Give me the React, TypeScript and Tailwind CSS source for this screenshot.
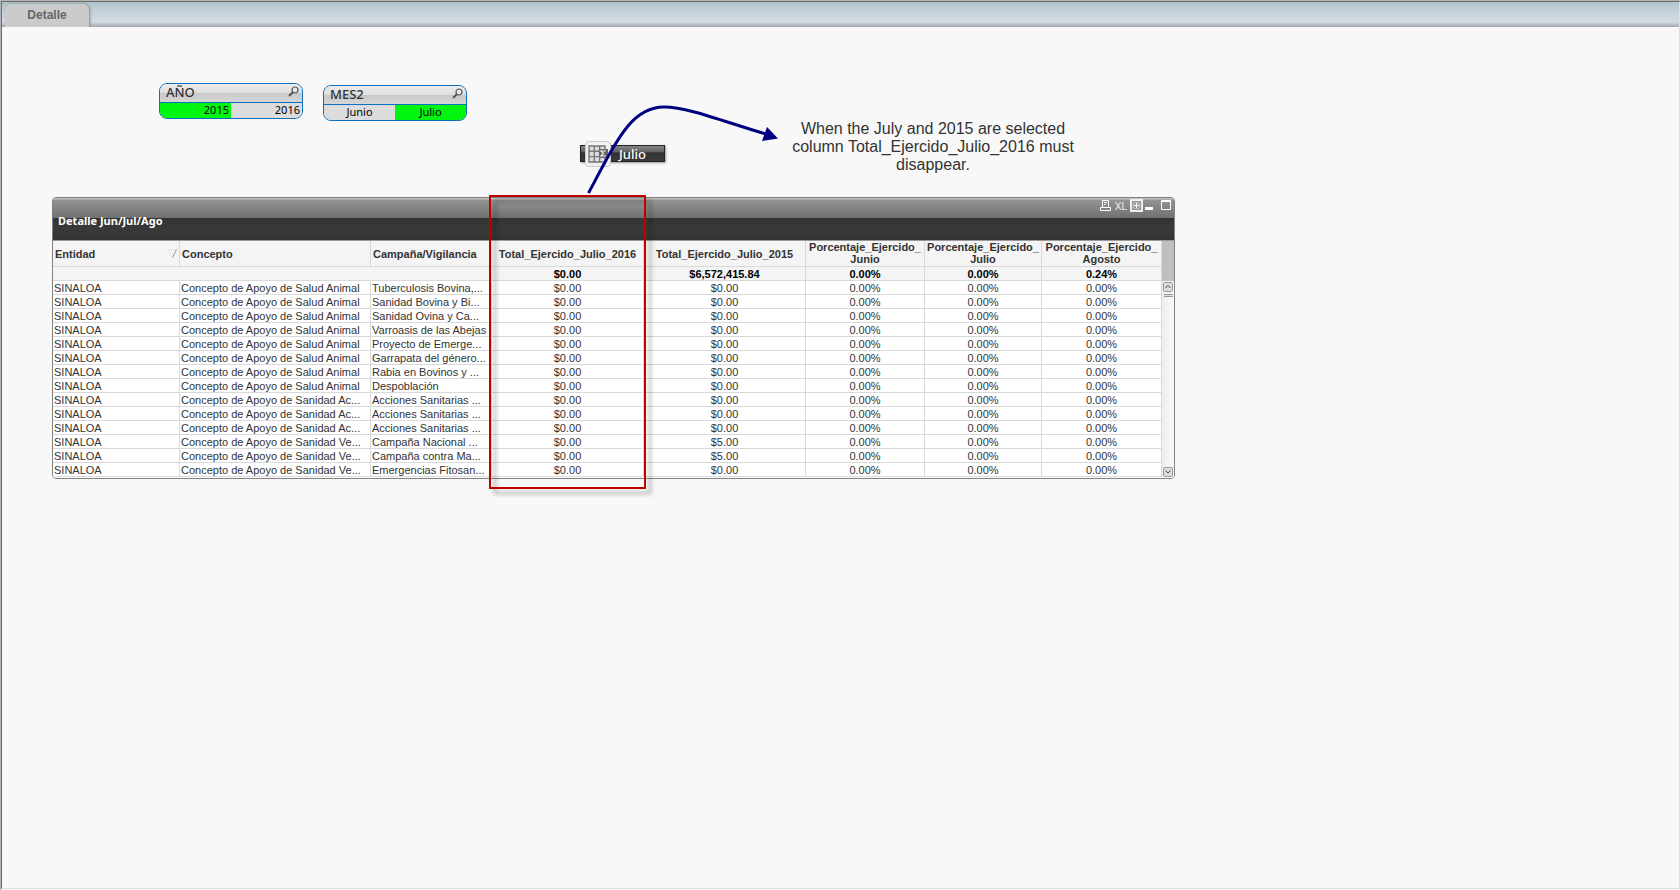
import React, { useState } from 'react';

interface ListBoxProps {
  title: string;
  values: string[];
  selected: string;
  align: 'right' | 'center';
  onSelect: (value: string) => void;
}

interface Row {
  concepto: string;
  campania: string;
  total2015: string;
}

const ANIMAL = 'Concepto de Apoyo de Salud Animal';
const ACUICOLA = 'Concepto de Apoyo de Sanidad Ac...';
const VEGETAL = 'Concepto de Apoyo de Sanidad Ve...';

const rows: Row[] = [
  { concepto: ANIMAL, campania: 'Tuberculosis Bovina,...', total2015: '$0.00' },
  { concepto: ANIMAL, campania: 'Sanidad Bovina y Bi...', total2015: '$0.00' },
  { concepto: ANIMAL, campania: 'Sanidad Ovina y Ca...', total2015: '$0.00' },
  { concepto: ANIMAL, campania: 'Varroasis de las Abejas', total2015: '$0.00' },
  { concepto: ANIMAL, campania: 'Proyecto de Emerge...', total2015: '$0.00' },
  { concepto: ANIMAL, campania: 'Garrapata del género...', total2015: '$0.00' },
  { concepto: ANIMAL, campania: 'Rabia en Bovinos y ...', total2015: '$0.00' },
  { concepto: ANIMAL, campania: 'Despoblación', total2015: '$0.00' },
  { concepto: ACUICOLA, campania: 'Acciones Sanitarias ...', total2015: '$0.00' },
  { concepto: ACUICOLA, campania: 'Acciones Sanitarias ...', total2015: '$0.00' },
  { concepto: ACUICOLA, campania: 'Acciones Sanitarias ...', total2015: '$0.00' },
  { concepto: VEGETAL, campania: 'Campaña Nacional ...', total2015: '$5.00' },
  { concepto: VEGETAL, campania: 'Campaña contra Ma...', total2015: '$5.00' },
  { concepto: VEGETAL, campania: 'Emergencias Fitosan...', total2015: '$0.00' },
];

const totals = ['$0.00', '$6,572,415.84', '0.00%', '0.00%', '0.24%'];

const textHead = 'h-[26px] border-b border-r border-[#d9d9d9] px-[2px] text-left font-bold';
const numHead = 'h-[26px] border-b border-r border-[#d9d9d9] p-0 text-center font-bold';
const wrapHead = 'h-[26px] border-b border-r border-[#d9d9d9] p-0 text-center align-top font-bold';
const textCell = 'h-[14px] overflow-hidden whitespace-nowrap border-b border-r border-[#d9d9d9] px-px pb-0 pt-px';
const numCell = 'h-[14px] border-b border-r border-[#d9d9d9] px-0 pb-0 pt-px text-center';

const ListBox: React.FC<ListBoxProps> = ({ title, values, selected, align, onSelect }) => (
  <section className="w-[144px] overflow-hidden rounded-lg border border-[#0c70c0] bg-[#dcdcdc] font-['Noto_Sans',sans-serif] text-[11px]">
    <header className="flex h-[18px] items-start justify-between bg-[linear-gradient(#ececec,#dedede_48%,#c9c9c9_52%,#d6d6d6)] pl-[6px] pr-[3px]">
      <h2 className="text-[13px] font-medium leading-[16px] text-[#333]">{title}</h2>
      <button type="button" aria-label={`Buscar ${title}`} className="pt-[2px]">
        <svg width="11" height="11" viewBox="0 0 11 11" fill="none" stroke="#555">
          <circle cx="7" cy="4" r="3" strokeWidth="1.2" fill="#e8e8e8" />
          <path d="M4.8 6.2 1 10" strokeWidth="2" />
        </svg>
      </button>
    </header>
    <div className="grid h-[16px] grid-cols-2 items-stretch border-t border-[#0c70c0]">
      {values.map((value) => (
        <button
          key={value}
          type="button"
          onClick={() => onSelect(value)}
          className={`px-[2px] pb-[2px] leading-[13px] text-black ${align === 'right' ? 'text-right' : 'text-center'} ${
            value === selected ? 'bg-[#00f510]' : 'bg-[#dcdcdc]'
          }`}
        >
          {value}
        </button>
      ))}
    </div>
  </section>
);

const CaptionButtons: React.FC = () => (
  <div className="flex items-center pr-[2px] pt-px">
    <button type="button" aria-label="Imprimir">
      <svg width="11" height="11" viewBox="0 0 11 11" fill="none" stroke="#fff">
        <path d="M2.5 7V.5h6V7M4 2.5h3M4 4.5h2M.5 7.5h10v3H.5z" />
      </svg>
    </button>
    <button type="button" className="ml-1 font-['Open_Sans',sans-serif] text-[11px] leading-[12px] text-[#f4f4f4]">
      XL
    </button>
    <button type="button" aria-label="Menú" className="ml-[3px]">
      <svg width="13" height="13" viewBox="0 0 13 13" fill="none">
        <path d="M1 1h11v11H1z" stroke="#eee" strokeWidth="2" fill="#999" />
        <path d="M4 3.5h5M4 9.5h5M3.5 4v5M9.5 4v5" stroke="#bbb" />
        <path d="M4 6.5h5M6.5 4v5" stroke="#fff" />
      </svg>
    </button>
    <button type="button" aria-label="Minimizar" className="ml-[2px]">
      <svg width="9" height="13" viewBox="0 0 9 13">
        <path d="M0 8h8v3H0z" fill="#fff" />
      </svg>
    </button>
    <button type="button" aria-label="Maximizar" className="ml-[7px]">
      <svg width="11" height="11" viewBox="0 0 11 11" fill="none" stroke="#fff">
        <path d="M.5.5h9v9h-9zM0 1.5h10" />
      </svg>
    </button>
  </div>
);

const ScrollBar: React.FC = () => (
  <div className="flex w-[12px] flex-col bg-[linear-gradient(to_right,#ededed,#fafafa)]">
    <div className="h-[40px] bg-[#bfbfbf]" />
    <button type="button" aria-label="Subir" className="mx-auto mt-px">
      <svg width="10" height="10" viewBox="0 0 10 10" fill="none">
        <rect x=".5" y=".5" width="9" height="9" rx="1" fill="#dcdcdc" stroke="#999" />
        <path d="M2.5 6 5 3.5 7.5 6" stroke="#7a2a35" />
      </svg>
    </button>
    <div className="mx-auto mt-[2px] h-[3px] w-[9px] border-y border-[#999] bg-[#ddd]" />
    <button type="button" aria-label="Bajar" className="mx-auto mt-auto">
      <svg width="10" height="10" viewBox="0 0 10 10" fill="none">
        <rect x=".5" y=".5" width="9" height="9" rx="1" fill="#dcdcdc" stroke="#999" />
        <path d="M2.5 3.5 5 6l2.5-2.5" stroke="#7a2a35" />
      </svg>
    </button>
  </div>
);

const DetailTable: React.FC = () => (
  <table className="w-full table-fixed border-separate border-spacing-0 bg-white text-[11px] leading-[12px] text-[#333]">
    <colgroup>
      <col className="w-[127px]" />
      <col className="w-[191px]" />
      <col className="w-[121px]" />
      <col className="w-[152px]" />
      <col className="w-[162px]" />
      <col className="w-[119px]" />
      <col className="w-[117px]" />
      <col />
    </colgroup>
    <thead className="bg-[#f4f4f4]">
      <tr>
        <th className={textHead}>
          <span className="flex items-center justify-between">
            Entidad
            <svg width="9" height="9" viewBox="0 0 9 9" fill="none">
              <path d="M0 .5h8.5M.5.5 4.5 8.5" stroke="#e4e4e4" />
              <path d="M8.5.5l-4 8" stroke="#999" />
            </svg>
          </span>
        </th>
        <th className={textHead}>Concepto</th>
        <th className={textHead}>Campaña/Vigilancia</th>
        <th className={numHead}>Total_Ejercido_Julio_2016</th>
        <th className={numHead}>Total_Ejercido_Julio_2015</th>
        <th className={wrapHead}>Porcentaje_Ejercido_<br />Junio</th>
        <th className={wrapHead}>Porcentaje_Ejercido_<br />Julio</th>
        <th className={wrapHead}>Porcentaje_Ejercido_<br />Agosto</th>
      </tr>
      <tr className="text-black">
        <td colSpan={3} className={numCell} />
        {totals.map((total, i) => (
          <td key={i} className={`${numCell} font-bold`}>{total}</td>
        ))}
      </tr>
    </thead>
    <tbody>
      {rows.map((row, i) => (
        <tr key={i}>
          <td className={textCell}>SINALOA</td>
          <td className={textCell}>{row.concepto}</td>
          <td className={textCell}>{row.campania}</td>
          <td className={numCell}>$0.00</td>
          <td className={numCell}>{row.total2015}</td>
          <td className={numCell}>0.00%</td>
          <td className={numCell}>0.00%</td>
          <td className={numCell}>0.00%</td>
        </tr>
      ))}
    </tbody>
  </table>
);

export default function App() {
  const [year, setYear] = useState('2015');
  const [month, setMonth] = useState('Julio');

  return (
    <div className="min-h-screen border-l border-t border-[#b4b4b4] bg-[#f8f8f8] font-['Liberation_Sans',Arial,sans-serif]">
      <div className="flex min-h-[calc(100vh-2px)] flex-col border border-b-[#e0e0e0] border-l-[#6b6b6b] border-r-[#e0e0e0] border-t-[#6b6b6b]">
        <nav className="flex h-[25px] items-end bg-[linear-gradient(#adc3cc,#c3d1d9_35%,#d3dae3_80%,#a4a8ac)] pl-[3px]">
          <button
            type="button"
            className="h-[23px] w-[84px] rounded-t-md bg-[#cbcbcb] pb-px text-[12px] font-bold text-[#666] shadow-[1px_0_3px_#888]"
          >
            Detalle
          </button>
        </nav>

        <main className="flex-1 bg-[#f8f8f8] pl-[50px] pt-14">
          <div className="flex items-start pl-[107px]">
            <ListBox title="AÑO" values={['2015', '2016']} selected={year} align="right" onSelect={setYear} />
            <div className="ml-5 mt-[2px]">
              <ListBox title="MES2" values={['Junio', 'Julio']} selected={month} align="center" onSelect={setMonth} />
            </div>

            <button
              type="button"
              className="ml-[113px] mt-[62px] flex h-[17px] w-[85px] items-center border border-[#222] bg-[linear-gradient(#858585,#606060_40%,#333_45%,#3a3a3a)] pl-1 shadow-[1px_1px_2px_#999]"
            >
              <svg width="26" height="26" viewBox="0 0 26 26" fill="none" className="shrink-0">
                <rect x=".5" y=".5" width="25" height="25" rx="3" fill="#f0f0f0" stroke="#c8c8c8" />
                <path d="M4 5h16v16H4z" fill="#ddd" stroke="#777" strokeWidth="1.4" />
                <path d="M4 10.3h16M4 15.6h16M9.3 5v16M14.6 5v16" stroke="#777" strokeWidth="1.4" />
                <path d="M14 8h9v9h-9z" fill="#666" />
                <path d="M21 10h-5l2.5 2.5L16 15h5" stroke="#eee" strokeWidth="1.2" />
              </svg>
              <span className="ml-2 font-['Noto_Sans',sans-serif] text-[13px] font-medium leading-[14px] text-white">Julio</span>
            </button>

            <p className="ml-[118px] mt-[37px] w-[300px] text-center text-[16px] leading-[18px] text-[#333]">
              When the July and 2015 are selected column Total_Ejercido_Julio_2016 must disappear.
            </p>
          </div>

          <div className="relative mt-[23px] w-full max-w-[1123px]">
            <section className="overflow-hidden rounded border border-[#808080]">
              <header className="flex h-[43px] items-start justify-between border-b border-[#999] bg-[linear-gradient(#c0c0c0_1px,#949494_2px,#707070_20px,#333_20px,#393939_32px,#333)] pl-[5px]">
                <h1 className="pt-4 font-['Noto_Sans',sans-serif] text-[11px] font-bold leading-[14px] text-white">
                  Detalle Jun/Jul/Ago
                </h1>
                <CaptionButtons />
              </header>
              <div className="flex bg-white pb-px">
                <div className="min-w-0 flex-1">
                  <DetailTable />
                </div>
                <ScrollBar />
              </div>
            </section>

            {/* callout around the 2016 column */}
            <div className="pointer-events-none absolute -top-[2px] left-[437px] h-[294px] w-[157px] border-2 border-[#c00000] drop-shadow-[5px_5px_2px_rgba(0,0,0,0.35)]" />
            <svg
              className="pointer-events-none absolute -top-[97px] left-[528px]"
              width="200"
              height="100"
              viewBox="0 0 200 100"
              fill="none"
            >
              <path d="M8.5 93C38 38 52 7 84 7C108 7 145 22 186 34" stroke="#000080" strokeWidth="3" />
              <path d="M198 38.500 187 27l-5 14z" fill="#000080" />
            </svg>
          </div>
        </main>
      </div>
    </div>
  );
}
